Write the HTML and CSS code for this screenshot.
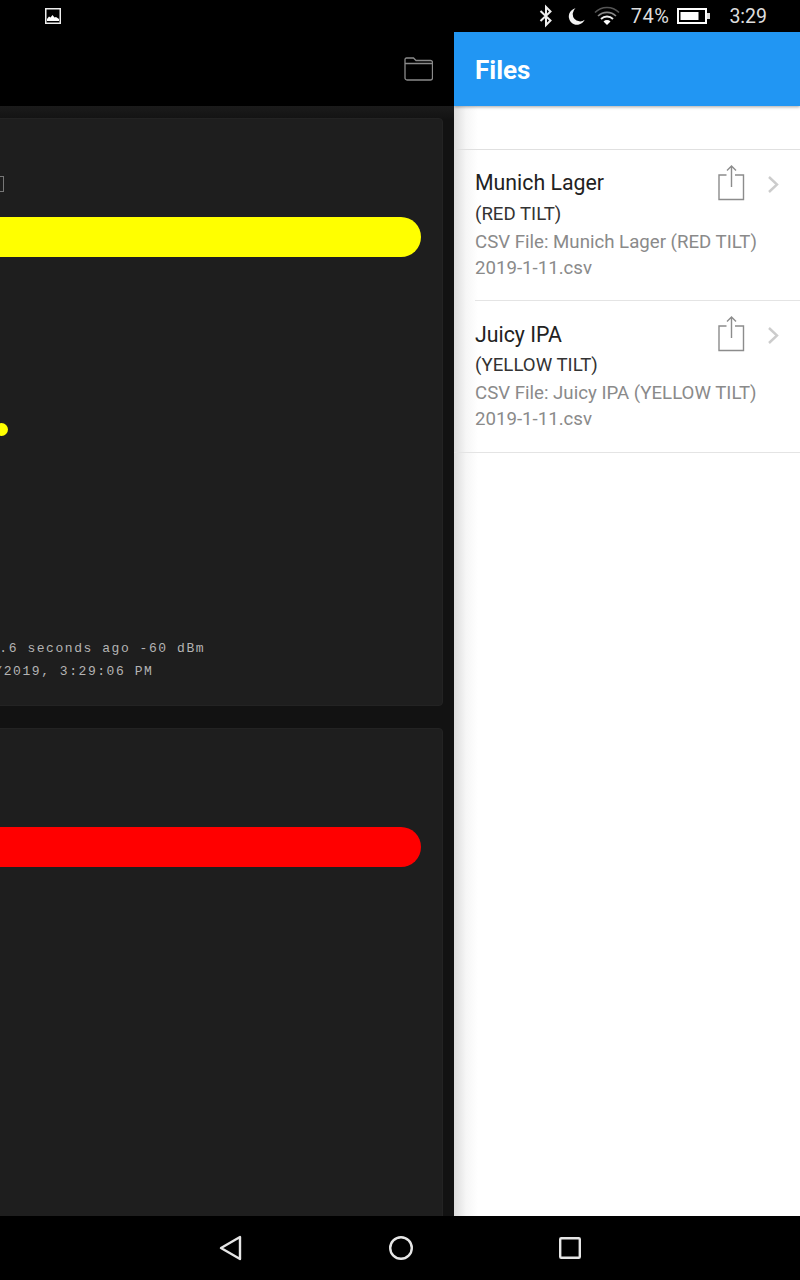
FILE: index.html
```html
<!DOCTYPE html>
<html lang="en">
<head>
<meta charset="utf-8">
<title>Files</title>
<link rel="stylesheet" href="styles.css">
</head>
<body>
<div class="screen">
  <div class="statusbar">
    <svg class="ic-image" viewBox="0 0 16 16" width="16" height="16"><rect x=".75" y=".75" width="14.5" height="14.5" fill="none" stroke="#eee" stroke-width="1.5"/><path d="M2 13v-2l2-2.500 1.500 1 2-2.500 2 2.500 1.500-.5 3 2v2z" fill="#fff"/></svg>
    <div class="status-right">
      <svg class="ic-bt" viewBox="0 0 16 24" width="16" height="24"><path d="M2.500 7l10 9.500L8 21V3l4.500 4.500L2.500 17" fill="none" stroke="#eee" stroke-width="2"/></svg>
      <svg class="ic-moon" viewBox="0 0 17 17" width="17" height="17"><path d="M7.500.3A8.300 8.300 0 1 0 16.700 11.800 6.800 6.800 0 0 1 7.500.3z" fill="#f4f4f4"/></svg>
      <svg class="ic-wifi" viewBox="0 0 26 20" width="26" height="20"><path d="M1 6.500a17 17 0 0 1 24 0" fill="none" stroke="#555" stroke-width="1.600"/><path d="M4 10a13 13 0 0 1 18 0" fill="none" stroke="#888" stroke-width="1.600"/><path d="M7 13a8.500 8.500 0 0 1 12 0" fill="none" stroke="#eee" stroke-width="1.800"/><path d="M13 19l-3.500-3.500a5 5 0 0 1 7 0z" fill="#fff"/></svg>
      <span class="pct">74%</span>
      <svg class="ic-batt" viewBox="0 0 33 16" width="33" height="16"><rect x="1" y="1" width="28" height="14" fill="none" stroke="#fff" stroke-width="2"/><rect x="3.500" y="4" width="18" height="8" fill="#fff"/><rect x="30" y="5" width="3" height="6" fill="#ddd"/></svg>
      <span class="clock">3:29</span>
    </div>
  </div>

  <div class="main">
    <div class="left">
      <div class="left-head">
        <svg class="ic-folder" viewBox="0 0 29 24" width="29" height="24"><path d="M1 21V2.500a1.500 1.500 0 0 1 1.500-1.500h7l2.500 2.500h14.500a2 2 0 0 1 2 2V21a2 2 0 0 1-2 2H3a2 2 0 0 1-2-2zM1 6.500h27.500" fill="none" stroke="#8a8a8a" stroke-width="1.300"/></svg>
      </div>
      <div class="cards">
        <div class="card card-one">
          <div class="tick"></div>
          <div class="bar bar-yellow"></div>
          <div class="dot"></div>
          <div class="meta">
            <div>1.6 seconds ago -60 dBm</div>
            <div class="meta-date">1/11/2019, 3:29:06 PM</div>
          </div>
        </div>
        <div class="card card-two">
          <div class="bar bar-red"></div>
        </div>
      </div>
    </div>

    <div class="drawer">
      <div class="drawer-head">Files</div>
      <div class="drawer-gap"></div>
      <div class="file file-first">
        <div class="file-text">
          <div class="file-name">Munich Lager</div>
          <div class="file-tilt">(RED TILT)</div>
          <div class="file-desc">CSV File: Munich Lager (RED TILT) 2019-1-11.csv</div>
        </div>
        <svg class="ic-share" viewBox="0 0 28 36" width="28" height="36"><path d="M8.500 10H1v24.500h24.500V10H17M13.500 22V1M9 5.500L13.500 1 18 5.500" fill="none" stroke="#8c8c8c" stroke-width="1.400"/></svg>
        <svg class="ic-chev" viewBox="0 0 12 18" width="12" height="18"><path d="M2 2l8 7.500-8 7.500" fill="none" stroke="#cccccc" stroke-width="2.400"/></svg>
      </div>
      <div class="file file-last">
        <div class="file-text">
          <div class="file-name">Juicy IPA</div>
          <div class="file-tilt">(YELLOW TILT)</div>
          <div class="file-desc">CSV File: Juicy IPA (YELLOW TILT) 2019-1-11.csv</div>
        </div>
        <svg class="ic-share" viewBox="0 0 28 36" width="28" height="36"><path d="M8.500 10H1v24.500h24.500V10H17M13.500 22V1M9 5.500L13.500 1 18 5.500" fill="none" stroke="#8c8c8c" stroke-width="1.400"/></svg>
        <svg class="ic-chev" viewBox="0 0 12 18" width="12" height="18"><path d="M2 2l8 7.500-8 7.500" fill="none" stroke="#cccccc" stroke-width="2.400"/></svg>
      </div>
    </div>
  </div>

  <div class="navbar">
    <svg class="ic-back" viewBox="0 0 23 26" width="23" height="26"><path d="M21 2v22L2 13z" fill="none" stroke="#e6e6e6" stroke-width="2.400" stroke-linejoin="round"/></svg>
    <svg class="ic-home" viewBox="0 0 24 24" width="24" height="24"><circle cx="12" cy="12" r="10.800" fill="none" stroke="#e6e6e6" stroke-width="2.400"/></svg>
    <svg class="ic-recent" viewBox="0 0 22 22" width="22" height="22"><rect x="1.200" y="1.200" width="19.600" height="19.600" rx="1" fill="none" stroke="#e6e6e6" stroke-width="2.400"/></svg>
  </div>
</div>
</body>
</html>
```

FILE: styles.css
```css
* { box-sizing: border-box; }
html, body { margin: 0; padding: 0; background: #000; }
body { font-family: Roboto, "Liberation Sans", sans-serif; }

.screen { width: 800px; height: 1280px; display: flex; flex-direction: column; overflow: hidden; }

.statusbar { height: 32px; flex: none; background: #000; display: flex; align-items: center; justify-content: space-between; padding: 0 33px 0 45px; color: #ddd; }
.status-right { display: flex; align-items: center; }
.ic-bt { margin-right: 14px; }
.ic-moon { margin-right: 9px; }
.ic-wifi { margin-right: 11px; }
.pct { font-size: 20px; margin-right: 8px; letter-spacing: .5px; }
.ic-batt { margin-right: 19px; }
.clock { font-size: 19.500px; }

.main { flex: 1; min-height: 0; display: flex; }

.left { width: 454px; flex: none; display: flex; flex-direction: column; overflow: hidden; background: #121212; }
.left-head { height: 74px; flex: none; background: #000; display: flex; align-items: center; justify-content: flex-end; padding-right: 21px; }
.cards { flex: 1; min-height: 0; padding: 12px 11px 0 0; display: flex; flex-direction: column; gap: 22px; background: linear-gradient(#1b1b1b, #121212 14px); }
.card { margin-left: -40px; flex: none; background: #1e1e1e; border: 1px solid #232323; border-radius: 4px; padding-right: 21px; }
.card-one { height: 588px; padding-top: 57px; }
.card-two { height: 500px; padding-top: 98px; }

.tick { width: 43px; height: 16px; border: 1px solid #777; }
.bar { height: 40px; border-radius: 0 20px 20px 0; }
.bar-yellow { margin-top: 25px; background: #ff0; }
.bar-red { background: #f00; }
.dot { width: 13px; height: 13px; margin: 166px 0 0 34px; border-radius: 50%; background: #ff0; }

.meta { margin: 200.500px 0 0 29px; font-family: "Liberation Mono", monospace; font-size: 13px; line-height: 23px; letter-spacing: 1.550px; color: #b4b4b4; white-space: nowrap; }
.meta-date { margin-left: -33px; }

.drawer { flex: 1; min-width: 0; background: linear-gradient(90deg, #dcdcdc, #f6f6f6 12px, #fff 24px); display: flex; flex-direction: column; }
.drawer-head { height: 74px; flex: none; background: #2196f3; color: #fff; font-size: 26px; font-weight: 700; display: flex; align-items: center; padding: 2px 0 0 21px; box-shadow: 0 1px 3px rgba(0,0,0,.35); }
.drawer-gap { height: 44px; flex: none; border-bottom: 1px solid #e0e0e0; }

.file { display: flex; align-items: flex-start; margin-left: 21px; padding: 17px 21px 17px 0; height: 151px; border-bottom: 1px solid #e4e4e4; }
.file-last { margin-left: 0; padding-left: 21px; height: 152px; }
.file-text { width: 243px; flex: none; }
.file-last .file-text { padding-top: 1px; }
.file-name { font-size: 21.300px; line-height: 32px; color: #222; }
.file-tilt { font-size: 18.650px; line-height: 30px; color: #333; }
.file-last .file-tilt { line-height: 29px; }
.file-desc { font-size: 18.650px; line-height: 26px; color: #8a8a8a; width: 295px; }
.ic-share { margin-top: -2px; flex: none; }
.ic-chev { margin: 8px 0 0 21px; flex: none; }

.navbar { height: 64px; flex: none; background: #000; display: flex; align-items: center; padding-left: 219px; }
.ic-back { margin-right: 147px; }
.ic-home { margin-right: 146px; }
```
